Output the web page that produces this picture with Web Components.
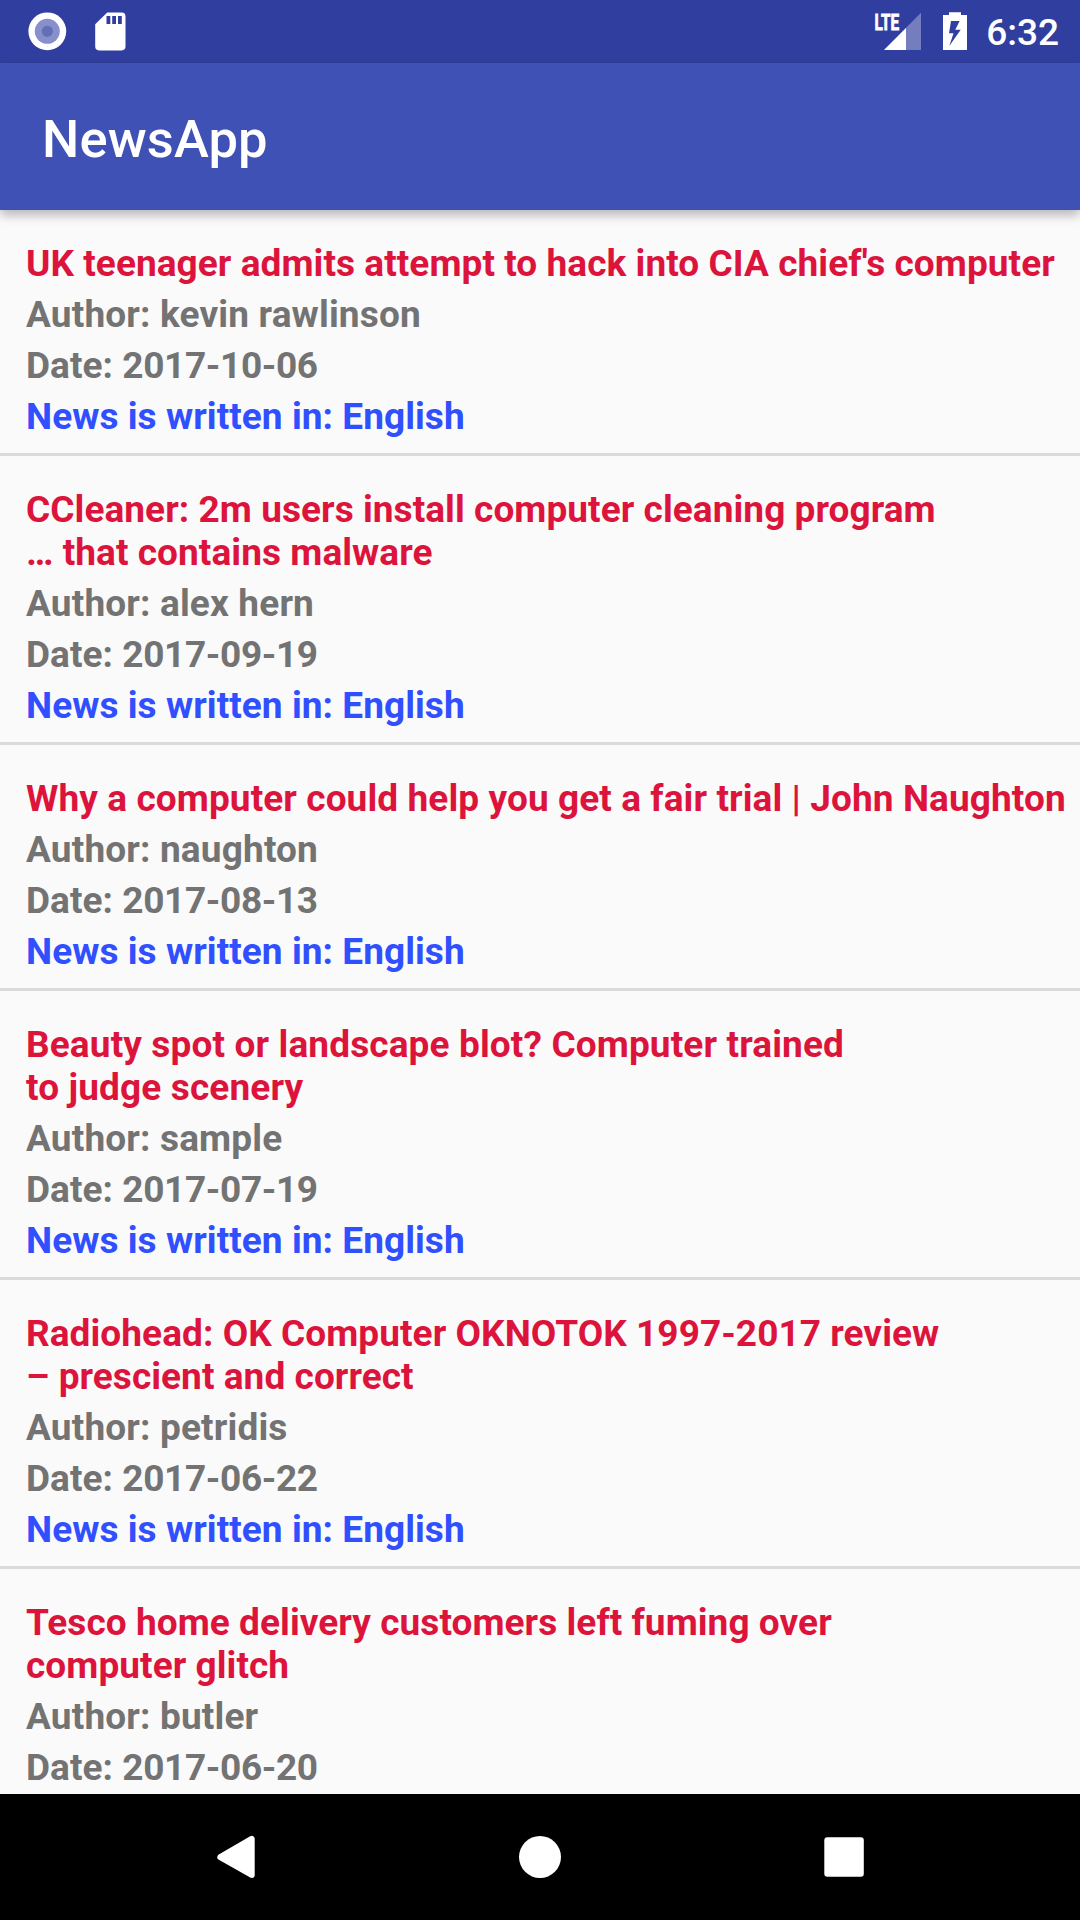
<!DOCTYPE html>
<html lang="en">
<head>
<meta charset="utf-8">
<title>NewsApp</title>
<style>
  html, body { margin: 0; height: 100%; }
  body { font-family: Roboto, "Noto Sans", sans-serif; background: #fafafa; overflow: hidden; }
</style>
</head>
<body>
<news-app>
  <status-bar slot="status" time="6:32"></status-bar>
  <app-toolbar slot="toolbar">NewsApp</app-toolbar>
  <news-item author="kevin rawlinson" date="2017-10-06">UK teenager admits attempt to hack into CIA chief's computer</news-item>
  <news-item author="alex hern" date="2017-09-19">CCleaner: 2m users install computer cleaning program<br>… that contains malware</news-item>
  <news-item author="naughton" date="2017-08-13" style="--track:.09px">Why a computer could help you get a fair trial | John Naughton</news-item>
  <news-item author="sample" date="2017-07-19" style="--track:.13px">Beauty spot or landscape blot? Computer trained<br>to judge scenery</news-item>
  <news-item author="petridis" date="2017-06-22">Radiohead: OK Computer OKNOTOK 1997-2017 review<br>– prescient and correct</news-item>
  <news-item author="butler" date="2017-06-20" last>Tesco home delivery customers left fuming over<br>computer glitch</news-item>
  <nav-bar slot="nav"></nav-bar>
</news-app>
<script>
const define = (name, html) => customElements.define(name, class extends HTMLElement {
  connectedCallback() {
    if (this.shadowRoot) return;
    const t = document.createElement('template');
    t.innerHTML = html(this);
    this.attachShadow({ mode: 'open' }).append(t.content.cloneNode(true));
  }
});

define('news-app', () => `
  <style>
    :host { display: flex; flex-direction: column; width: 1080px; height: 1920px; overflow: hidden; background: #fafafa; }
    main { flex: 1; min-height: 0; overflow: hidden; display: flex; flex-direction: column; }
    ::slotted([slot]) { flex: none; }
  </style>
  <slot name="status"></slot>
  <slot name="toolbar"></slot>
  <main><slot></slot></main>
  <slot name="nav"></slot>`);

define('status-bar', el => `
  <style>
    :host { display: flex; height: 63px; box-sizing: border-box; background: #303f9f; color: #fff; justify-content: space-between; align-items: flex-start; padding: 0 21px 0 28px; }
    div { display: flex; }
    svg { display: block; flex: none; }
    .time { font-size: 37px; font-weight: 500; line-height: 43px; padding-top: 11px; margin-left: 19px; }
  </style>
  <div>
    <svg width="100" height="63" viewBox="28 0 100 63">
      <circle cx="47.3" cy="31.3" r="18.9" fill="#fff"/>
      <circle cx="47.3" cy="31.3" r="12.5" fill="#8790ca"/>
      <circle cx="47.3" cy="31.3" r="5.6" fill="#656fb9"/>
      <path fill="#fff" fill-rule="evenodd" d="M107.2 12.5H121.7Q125.5 12.5 125.5 16.3V46.6Q125.5 50.4 121.7 50.4H99Q95.2 50.4 95.2 46.6V24.2ZM106.5 16V24H110.3V16ZM112.2 16V24H116V16ZM118 16V24H121.8V16Z"/>
    </svg>
  </div>
  <div>
    <svg width="94" height="63" viewBox="873 0 94 63">
      <path d="M921 12.8V50H884Z" fill="#fff" opacity=".33"/>
      <path d="M906 28V50H884Z" fill="#fff"/>
      <text x="874.5" y="29.7" font-size="22" font-weight="700" fill="#fff" stroke="#fff" stroke-width=".8" textLength="24.7" lengthAdjust="spacingAndGlyphs">LTE</text>
      <path fill="#fff" fill-rule="evenodd" d="M949 12.3H961V15H967V50H943V15H949ZM951 21L949 33.3H953.5L949.3 46L960.7 29.8H955.3L959.6 21Z"/>
    </svg>
    <span class="time">${el.getAttribute('time')}</span>
  </div>`);

define('app-toolbar', () => `
  <style>
    :host { display: flex; align-items: center; height: 147px; box-sizing: border-box; padding: 0 42px 0; background: #3f51b5; color: #fff; font-size: 52.5px; font-weight: 500; letter-spacing: .15px; line-height: 62px; position: relative; z-index: 1; box-shadow: 0 5px 10px rgba(0,0,0,.28); }
    span { padding-top: 4px; }
  </style>
  <span><slot></slot></span>`);

define('news-item', el => `
  <style>
    :host { display: flex; flex-direction: column; flex: none; gap: 8px; padding: 32px 0 15px 26px; border-bottom: 3px solid #dadbda; font-size: 37px; font-weight: 700; line-height: 43px; letter-spacing: .06px; white-space: nowrap; color: #737373; }
    :host([last]) { border-bottom: 0; }
    .title { color: #dc143c; letter-spacing: var(--track, .06px); }
    .author { letter-spacing: .16px; }
    .date span { letter-spacing: -.36px; }
    .lang { color: #304ffe; }
  </style>
  <div class="title"><slot></slot></div>
  <div class="author">Author: ${el.getAttribute('author')}</div>
  <div class="date">Date: <span>${el.getAttribute('date')}</span></div>
  ${el.hasAttribute('last') ? '' : '<div class="lang">News is written in: English</div>'}`);

define('nav-bar', () => `
  <style>
    :host { display: flex; height: 126px; background: #000; justify-content: center; }
    div { width: 304px; display: flex; justify-content: center; }
    svg { display: block; }
  </style>
  <div><svg width="126" height="126" viewBox="173 1794 126 126"><path fill="#fff" stroke="#fff" stroke-width="6" stroke-linejoin="round" d="M220.3 1857.2L251.7 1838.8V1875Z"/></svg></div>
  <div><svg width="126" height="126"><circle cx="63" cy="63" r="21" fill="#fff"/></svg></div>
  <div><svg width="126" height="126" viewBox="781 1794 126 126"><rect x="824.3" y="1837.2" width="39.5" height="39.5" rx="3" fill="#fff"/></svg></div>`);
</script>
</body>
</html>
